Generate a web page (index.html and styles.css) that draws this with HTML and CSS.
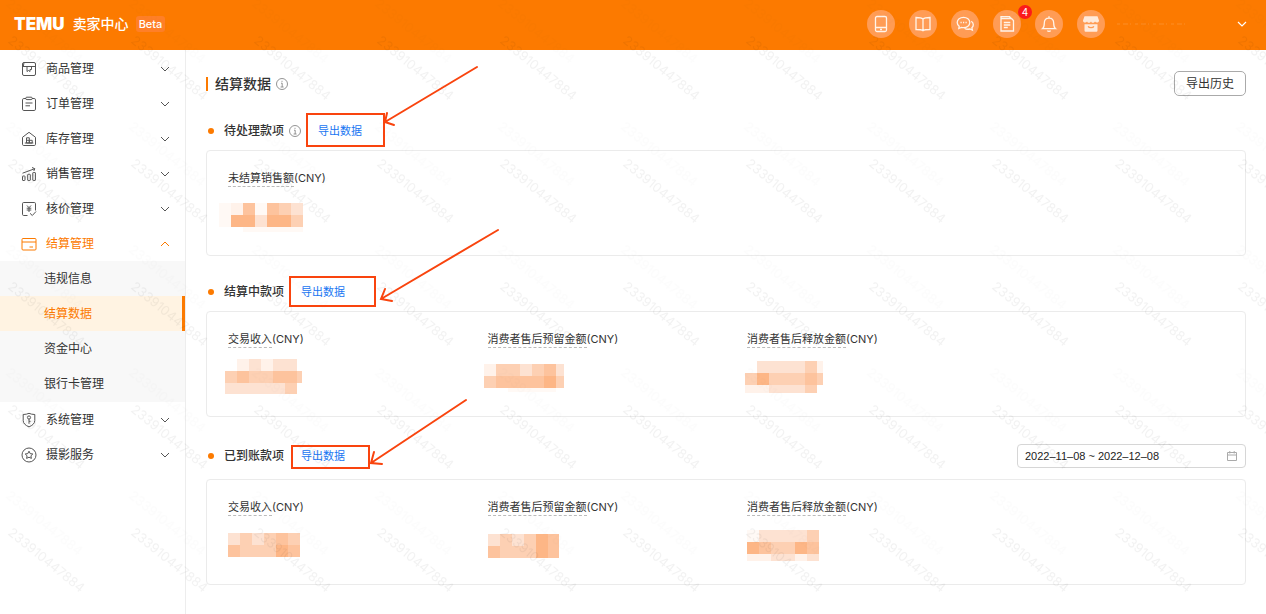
FILE: index.html
```html
<!DOCTYPE html>
<html lang="zh-CN">
<head>
<meta charset="utf-8">
<title>TEMU 卖家中心 - 结算数据</title>
<link rel="stylesheet" href="styles.css">
</head>
<body>
<svg class="defs" aria-hidden="true">
  <symbol id="chev" viewBox="0 0 12 12"><path d="M2 4l4 4 4-4"/></symbol>
  <symbol id="info" viewBox="0 0 12 12"><circle cx="6" cy="6" r="5.5"/><path d="M5 5.2h1.2V9M4.600 9h3M6 2.800v1.100"/></symbol>
</svg>

<header class="topbar">
  <span class="logo">TEMU</span>
  <span class="product">卖家中心</span>
  <span class="beta">Beta</span>
  <nav class="tools" aria-label="快捷入口">
    <button class="tool" aria-label="手机端"><svg viewBox="0 0 28 28"><rect x="8.5" y="6.500" width="11" height="15" rx="1.500"/><path d="M8.500 17.500h11M13 19.500h2"/></svg></button>
    <button class="tool" aria-label="学习中心"><svg viewBox="0 0 28 28"><path d="M14 9c-1.500-1.400-4-1.500-7-1.500v12c3 0 5.500.1 7 1.200 1.500-1.100 4-1.200 7-1.200v-12c-3 0-5.500.1-7 1.500zM14 9v11.500"/></svg></button>
    <button class="tool" aria-label="消息"><svg viewBox="0 0 28 28"><path d="M7.800 18.500l.4-2.200A5.200 4.900 0 0 1 6.200 12.500c0-3 2.800-5.200 6.300-5.200s6.300 2.200 6.300 5.200-2.800 5.200-6.300 5.200c-.8 0-1.500-.1-2.100-.3zM20.300 11.300c1.300.8 2 2 2 3.500 0 1.200-.5 2.200-1.400 3l.5 2.400-2.500-1.200c-2 .5-4 .2-5.300-.8"/><path d="M9.500 12.500h1.200M12 12.500h1.200M14.500 12.500h1.200"/></svg></button>
    <button class="tool" aria-label="通知 4"><svg viewBox="0 0 28 28"><path d="M8 8.500h10.500l2 2V21H8zM8 8.500V6.700h8.500l1.600 1.800M10.800 12.500h6.500M10.800 15h6.500M10.800 17.500h4"/></svg><span class="badge">4</span></button>
    <button class="tool" aria-label="提醒"><svg viewBox="0 0 28 28"><path d="M7.500 18.700h13c-1.600-1.200-1.800-3-1.800-5.400 0-3-1.700-5.100-4.700-5.100s-4.700 2.100-4.700 5.100c0 2.400-.2 4.200-1.800 5.400zM14 8V6.300M12.300 20.600c.8.900 2.600.9 3.400 0"/></svg></button>
    <button class="tool" aria-label="店铺"><svg viewBox="0 0 28 28"><path class="solid" d="M7.500 6.200h13l1.500 4.300c0 2.400-3 2.700-4 .9-1 1.800-3.300 1.800-4 0-1 1.800-3.300 1.800-4 0-1 1.800-4 1.500-4-.9zM7.500 14.200h13v6c0 1-.5 1.500-1.500 1.500H9c-1 0-1.500-.5-1.500-1.500z"/><path class="smile" d="M11.200 16.200c.6 2 5 2 5.600 0"/></svg></button>
  </nav>
  <button class="account" aria-label="账号"><svg class="smudge" viewBox="0 0 72 4"><path d="M1 2h70"/></svg><svg class="chev"><use href="#chev"/></svg></button>
</header>

<div class="layout">
  <nav class="side" aria-label="主菜单">
    <a class="item" href="#"><svg class="ico" viewBox="0 0 16 16"><rect x="1.500" y="1.500" width="13" height="13" rx="1.500"/><path d="M1.500 5.500h13M3 1.500L2.300 5.500M6 5.500v5l1.500-1 1.500 1v-2M9 8.500h1.500v-3"/></svg>商品管理<svg class="chev"><use href="#chev"/></svg></a>
    <a class="item" href="#"><svg class="ico" viewBox="0 0 16 16"><path d="M5 2.500H2.800c-.8 0-1.300.5-1.300 1.300v9.400c0 .8.500 1.300 1.300 1.300h10.400c.8 0 1.300-.5 1.300-1.300V3.800c0-.8-.5-1.300-1.300-1.300H11"/><rect x="4.800" y="1.200" width="6.400" height="2.400" rx="1"/><path d="M4.500 7h7M4.500 9.800h4.500"/></svg>订单管理<svg class="chev"><use href="#chev"/></svg></a>
    <a class="item" href="#"><svg class="ico" viewBox="0 0 16 16"><path d="M1.500 6.300L8 1.300l6.500 5v7c0 .8-.5 1.200-1.200 1.200H2.700c-.7 0-1.200-.4-1.200-1.200z"/><path d="M5.500 12V6.800h2.800V12M5.500 9.300h5.700V12H5.500zM8.300 9.300V12M3.800 12h8.500"/></svg>库存管理<svg class="chev"><use href="#chev"/></svg></a>
    <a class="item" href="#"><svg class="ico" viewBox="0 0 16 16"><rect x="1.500" y="10" width="2.500" height="4.500" rx=".5"/><rect x="6.700" y="8.300" width="2.600" height="6.200" rx=".5"/><rect x="11.800" y="6.500" width="2.600" height="8" rx=".5"/><path d="M1.500 7.200l12-4.400M11 1.500l2.800 1.200-1 2.300"/></svg>销售管理<svg class="chev"><use href="#chev"/></svg></a>
    <a class="item" href="#"><svg class="ico" viewBox="0 0 16 16"><path d="M6.500 14.500H2.700c-.8 0-1.200-.4-1.200-1.200V2.700c0-.8.4-1.200 1.200-1.200h10.600c.8 0 1.200.4 1.200 1.200v6.800M9 12.300l2.300 2.200 3.700-4"/><path d="M6 4.500l2 2.200 2-2.200M8 6.700V11M5.700 7.200h4.600M5.700 9h4.600"/></svg>核价管理<svg class="chev"><use href="#chev"/></svg></a>
    <a class="item open" href="#"><svg class="ico" viewBox="0 0 16 16"><rect x="1" y="2.500" width="14" height="11.500" rx="1"/><path d="M1 6h14M8.500 11h3.500"/></svg>结算管理<svg class="chev"><use href="#chev"/></svg></a>
    <div class="sub">
      <a href="#">违规信息</a>
      <a class="current" href="#" aria-current="page">结算数据</a>
      <a href="#">资金中心</a>
      <a href="#">银行卡管理</a>
    </div>
    <a class="item" href="#"><svg class="ico" viewBox="0 0 16 16"><path d="M2.200 2.500C4.500 2.500 6.500 2 8 1.300c1.500.7 3.500 1.200 5.800 1.200v6c0 3-2.400 4.900-5.800 6.400-3.400-1.500-5.800-3.400-5.800-6.400z"/><circle cx="8" cy="5.500" r="1.600"/><path d="M8 7.100v4.700M8 9.300h1.600"/></svg>系统管理<svg class="chev"><use href="#chev"/></svg></a>
    <a class="item" href="#"><svg class="ico" viewBox="0 0 16 16"><circle cx="8" cy="8" r="7"/><path d="M8 4.200l1.200 2.400 2.600.4-1.900 1.800.5 2.600L8 10.200l-2.400 1.200.5-2.600L4.200 7l2.600-.4z"/></svg>摄影服务<svg class="chev"><use href="#chev"/></svg></a>
  </nav>

  <main class="main">
    <div class="title-row">
      <h1>结算数据</h1>
      <svg class="info"><use href="#info"/></svg>
      <button class="history">导出历史</button>
    </div>

    <section>
      <div class="head"><h2>待处理款项</h2><svg class="info"><use href="#info"/></svg><a class="export" href="#">导出数据</a></div>
      <div class="card">
        <div class="cell">
          <p><span class="term">未结算销售额</span>(CNY)</p>
          <svg class="mosaic" viewBox="0 0 90 40">
            <g stroke-width="12"><path class="s0" d="M0 12h12M36 12h12"/><path class="s1" d="M12 12h12"/><path class="s2" d="M72 12h12"/><path class="s3" d="M60 12h12"/><path class="s4" d="M24 12h12M48 12h12"/></g>
            <g stroke-width="12"><path class="s0" d="M0 24h12"/><path class="s2" d="M36 24h12"/><path class="s3" d="M72 24h12"/><path class="s5" d="M12 24h24M48 24h24"/></g>
            <g stroke-width="5"><path class="s0" d="M24 32.500h60"/></g>
          </svg>
        </div>
      </div>
    </section>

    <section>
      <div class="head"><h2>结算中款项</h2><a class="export" href="#">导出数据</a></div>
      <div class="card">
        <div class="cell">
          <p><span class="term">交易收入</span>(CNY)</p>
          <svg class="mosaic" viewBox="0 0 90 40">
            <g stroke-width="12"><path class="s1" d="M18 7h12M42 7h12"/><path class="s2" d="M30 7h12M54 7h24"/></g>
            <g stroke-width="12"><path class="s3" d="M6 19h12M30 19h24M78 19h5"/><path class="s4" d="M18 19h12M54 19h24"/></g>
            <g stroke-width="11"><path class="s2" d="M6 30.500h60"/><path class="s3" d="M66 30.500h12"/></g>
          </svg>
        </div>
        <div class="cell">
          <p><span class="term">消费者售后预留金额</span>(CNY)</p>
          <svg class="mosaic" viewBox="0 0 90 40">
            <g stroke-width="12"><path class="s1" d="M5 12h12"/><path class="s3" d="M17 12h24M53 12h12"/><path class="s2" d="M41 12h12M77 12h8"/><path class="s4" d="M65 12h12"/></g>
            <g stroke-width="12"><path class="s3" d="M5 24h12M77 24h8"/><path class="s4" d="M17 24h48"/><path class="s5" d="M65 24h12"/></g>
            <g stroke-width="4"><path class="s0" d="M29 32h48"/></g>
          </svg>
        </div>
        <div class="cell">
          <p><span class="term">消费者售后释放金额</span>(CNY)</p>
          <svg class="mosaic" viewBox="0 0 90 40">
            <g stroke-width="12"><path class="s2" d="M19 9h48"/><path class="s3" d="M67 9h12"/><path class="s1" d="M79 9h6"/></g>
            <g stroke-width="12"><path class="s3" d="M7 21h12M31 21h36M79 21h6"/><path class="s5" d="M19 21h12"/><path class="s4" d="M67 21h12"/></g>
            <g stroke-width="8"><path class="s1" d="M7 31h24"/><path class="s2" d="M31 31h36"/><path class="s3" d="M67 31h12"/></g>
          </svg>
        </div>
      </div>
    </section>

    <section class="received">
      <div class="head"><h2>已到账款项</h2><a class="export" href="#">导出数据</a>
        <label class="range"><input type="text" aria-label="日期范围" value="2022–11–08 ~ 2022–12–08"><svg viewBox="0 0 12 12"><path d="M1.500 2.500h9v8h-9zM1.500 5h9M3.800 1v2.500M8.200 1v2.500"/></svg></label>
      </div>
      <div class="card">
        <div class="cell">
          <p><span class="term">交易收入</span>(CNY)</p>
          <svg class="mosaic" viewBox="0 0 90 40">
            <g stroke-width="12"><path class="s2" d="M9 13h12M33 13h12"/><path class="s3" d="M21 13h12M45 13h12M69 13h12"/><path class="s4" d="M57 13h12"/></g>
            <g stroke-width="12"><path class="s4" d="M9 25h12M69 25h12"/><path class="s3" d="M21 25h36"/><path class="s5" d="M57 25h12"/></g>
          </svg>
        </div>
        <div class="cell">
          <p><span class="term">消费者售后预留金额</span>(CNY)</p>
          <svg class="mosaic" viewBox="0 0 90 40">
            <g stroke-width="12"><path class="s2" d="M9 14h12M33 14h12"/><path class="s3" d="M21 14h12M45 14h12"/><path class="s5" d="M57 14h12"/><path class="s4" d="M69 14h11"/></g>
            <g stroke-width="12"><path class="s4" d="M9 26h12M69 26h11"/><path class="s3" d="M21 26h36"/><path class="s5" d="M57 26h12"/></g>
          </svg>
        </div>
        <div class="cell">
          <p><span class="term">消费者售后释放金额</span>(CNY)</p>
          <svg class="mosaic" viewBox="0 0 90 40">
            <g stroke-width="12"><path class="s0" d="M9 10h12"/><path class="s2" d="M21 10h48"/><path class="s3" d="M69 10h12"/></g>
            <g stroke-width="12"><path class="s5" d="M9 22h12M57 22h12"/><path class="s4" d="M21 22h12M69 22h12"/><path class="s3" d="M33 22h24"/></g>
            <g stroke-width="7"><path class="s1" d="M9 31.500h24M57 31.500h12"/><path class="s2" d="M33 31.500h24M69 31.500h12"/></g>
          </svg>
        </div>
      </div>
    </section>
  </main>
</div>

<svg class="overlay" aria-hidden="true">
  <defs>
    <pattern id="wm" x="5" y="-3" width="123" height="123" patternUnits="userSpaceOnUse">
      <text class="wm" transform="translate(2 45) rotate(39)">233910447884</text>
      <text class="wm faint" transform="translate(0 8) rotate(39)">233910447884</text>
    </pattern>
  </defs>
  <rect class="tile" width="100%" height="100%" fill="url(#wm)"/>
  <g class="marks">
    <rect x="307" y="114" width="77" height="32"/>
    <rect x="290" y="277" width="85" height="29"/>
    <rect x="292" y="446" width="77" height="22"/>
    <path d="M477 67L385 122M387 113L385 122L394 125"/>
    <path d="M498 230L381 299M385 289L381 299L392 301"/>
    <path d="M466 400L371 463M374 452L371 463L382 464"/>
  </g>
</svg>
</body>
</html>
```

FILE: styles.css
```css
* { box-sizing: border-box; }
body {
  margin: 0;
  min-height: 100vh;
  display: flex;
  flex-direction: column;
  position: relative;
  background: #fff;
  color: #333;
  font: 12px/16px Inter, "Noto Sans CJK SC", sans-serif;
}
h1, h2, p { margin: 0; }
a { color: inherit; text-decoration: none; }
button { font: inherit; color: inherit; padding: 0; border: 0; background: none; cursor: pointer; }
svg { display: block; flex: none; fill: none; stroke: currentColor; }
.defs { position: absolute; width: 0; height: 0; }

.topbar {
  height: 50px;
  flex: none;
  display: flex;
  align-items: center;
  padding: 0 18px 2px 14px;
  background: #fc7a00;
  color: #fff;
}
.logo { font-size: 17px; font-weight: 900; line-height: 20px; }
.product { margin-left: 8px; font-size: 14px; font-weight: 500; line-height: 20px; }
.beta {
  margin-left: 7px;
  padding: 0 3px;
  border-radius: 3px;
  background: #ff7f27;
  font-size: 11px;
  font-weight: 500;
}
.tools { display: flex; gap: 14px; margin-left: auto; }
.tool { position: relative; width: 28px; height: 28px; border-radius: 50%; background: #ff9c55; }
.tool svg { width: 28px; height: 28px; stroke-width: 1.3; stroke: #fff4ea; }
.tool .solid { fill: #ffeadb; stroke: none; }
.tool .smile { stroke: #ff9c55; }
.badge {
  position: absolute;
  top: -5px;
  right: -11px;
  width: 14px;
  height: 14px;
  border-radius: 50%;
  background: #fb1b1b;
  font-size: 10px;
  line-height: 14px;
}
.account { display: flex; align-items: center; justify-content: space-between; width: 132px; margin-left: 11px; }
.smudge { width: 72px; height: 4px; opacity: .15; stroke-dasharray: 3 3 5 2 1 4; }
.chev { width: 12px; height: 12px; }
.account .chev { stroke-width: 1.2; }

.layout { flex: 1; display: flex; }
.side { width: 186px; flex: none; padding-top: 1px; border-right: 1px solid #ededed; }
.item { display: flex; align-items: center; height: 35px; padding: 0 14px 0 21px; }
.ico { width: 16px; height: 16px; margin-right: 9px; stroke: #555; }
.item .chev { margin-left: auto; stroke: #555; }
.open { color: #fc7a00; }
.open .ico, .open .chev { stroke: #fc7a00; }
.open .chev { transform: rotate(180deg); }
.sub { padding-bottom: 1px; background: #f8f8f8; }
.sub a { display: block; padding-left: 44px; line-height: 35px; }
.sub .current { background: #fff3e2; color: #fc7a00; border-right: 3px solid #fc7a00; }

.main { flex: 1; min-width: 0; padding: 21px 20px 28px; }
.title-row { display: flex; align-items: center; height: 25px; margin-bottom: 23px; }
h1 { padding-left: 7px; font-size: 14px; font-weight: 500; line-height: 14px; border-left: 2px solid #fc7a00; }
.info { width: 12px; height: 12px; margin-left: 5px; stroke: #888; stroke-width: .9; }
.history {
  margin-left: auto;
  height: 25px;
  padding: 0 11px;
  border: 1px solid #aaa;
  border-radius: 5px;
  background: #fff;
}
section { margin-bottom: 24px; }
.head { display: flex; align-items: center; height: 24px; margin-bottom: 7px; }
h2 { display: flex; align-items: center; font-size: 12px; font-weight: 500; line-height: 16px; }
h2::before { content: ""; width: 6px; height: 6px; margin: 0 10px 0 2px; border-radius: 50%; background: #fc7a00; }
.export { margin-left: 17px; color: #1876f2; font-size: 11px; }
.card {
  display: grid;
  grid-template-columns: repeat(4, 1fr);
  min-height: 106px;
  padding: 19px 0 18px;
  border: 1px solid #ebebeb;
  border-radius: 4px;
}
.cell { padding-left: 21px; }
.cell p { display: flex; font-size: 11px; }
.term { border-bottom: 1px dashed #bbb; }
.mosaic { width: 90px; height: 40px; margin: 10px 0 0 -9px; stroke: none; shape-rendering: crispEdges; }
.s0 { stroke: #fff9f5; }
.s1 { stroke: #fff2ea; }
.s2 { stroke: #fde2d2; }
.s3 { stroke: #fdd0b3; }
.s4 { stroke: #fdc39d; }
.s5 { stroke: #fdb686; }

.received { margin: 27px 0 0; }
.received .head { margin-bottom: 11px; }
.range {
  display: flex;
  align-items: center;
  width: 229px;
  height: 24px;
  margin-left: auto;
  padding: 0 7px;
  border: 1px solid #d6d6d6;
  border-radius: 4px;
}
.range input { flex: 1; min-width: 0; padding: 0; border: 0; background: none; color: #222; font: 11px/16px "Liberation Sans", sans-serif; }
.range svg { width: 12px; height: 12px; stroke: #aaa; }

.overlay { position: absolute; inset: 0; width: 100%; height: 100%; pointer-events: none; }
.tile { stroke: none; }
.wm { fill: #000; fill-opacity: .05; stroke: none; font-size: 13px; }
.faint { fill-opacity: .01; }
.marks { stroke: #f9440e; stroke-width: 2; stroke-linecap: round; }
```
